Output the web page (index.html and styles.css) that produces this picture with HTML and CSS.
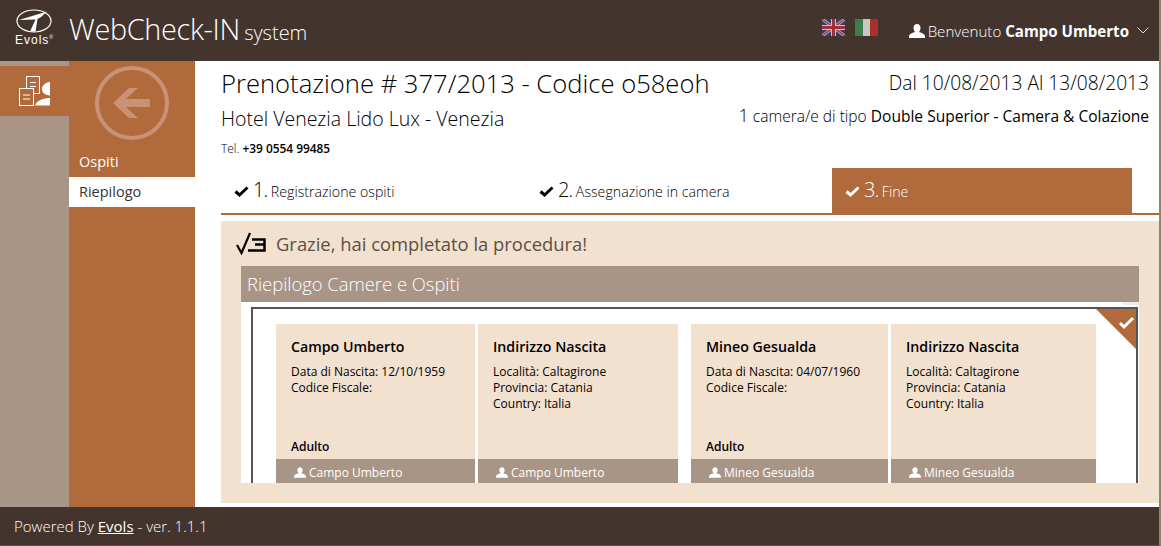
FILE: index.html
```html
<!DOCTYPE html>
<html lang="it">
<head>
    <meta charset="UTF-8">
    <title>WebCheck-IN system</title>
    <link rel="stylesheet" href="styles.css">
</head>
<body>
    <svg width="0" height="0" class="defs">
        <symbol id="person" viewBox="0 0 16 14">
            <path d="M8 0C10 0 11.500 1.500 11.500 3.800 11.500 6 10.500 7.500 9.800 8 12 8.800 16 9.500 16 12.500V14H0V12.500C0 9.500 4 8.800 6.200 8 5.500 7.500 4.500 6 4.500 3.800 4.500 1.500 6 0 8 0Z" fill="#fff"/>
        </symbol>
        <symbol id="tick" viewBox="0 0 15 11">
            <path d="M1.500 5.500L5.500 9 13.500 1.500" fill="none" stroke="currentColor" stroke-width="3"/>
        </symbol>
    </svg>

    <header class="top">
        <div class="logo">
            <svg width="36" height="24" viewBox="0 0 36 24">
                <ellipse cx="18" cy="12" rx="17" ry="11" fill="none" stroke="#fff" stroke-width="1.200"/>
                <path d="M3 11L31 2.500 25 8 21.500 10 19.500 22.500 14 22.500 19.500 10.500Z" fill="#fff"/>
            </svg>
            <span class="logo-text">Evols<sup>®</sup></span>
        </div>
        <div class="brand">WebCheck-IN <small>system</small></div>
        <div class="flags">
            <svg class="flag" viewBox="0 0 23 17">
                <rect width="23" height="17" fill="#2f3f78"/>
                <path d="M0 0L23 17M23 0L0 17" stroke="#ddd" stroke-width="3"/>
                <path d="M0 0L23 17M23 0L0 17" stroke="#b0404a" stroke-width="1.500"/>
                <path d="M11.500 0V17M0 8.500H23" stroke="#ddd" stroke-width="5"/>
                <path d="M11.500 0V17M0 8.500H23" stroke="#b0303a" stroke-width="3"/>
            </svg>
            <svg class="flag" viewBox="0 0 23 17">
                <rect width="8" height="17" fill="#3f8a55"/>
                <rect x="8" width="8" height="17" fill="#e4e0dc"/>
                <rect x="15" width="8" height="17" fill="#bb3030"/>
            </svg>
        </div>
        <div class="user">
            <svg class="person" width="16" height="14"><use href="#person"/></svg>
            <span>Benvenuto <b>Campo Umberto</b></span>
            <svg class="chevron" width="12" height="7" viewBox="0 0 12 7"><path d="M.5.5L6 6 11.500.5" fill="none" stroke="#ddd"/></svg>
        </div>
    </header>

    <div class="layout">
        <nav class="rail">
            <div class="rail-item">
                <svg width="31" height="30" viewBox="0 0 31 30">
                    <rect x="7.500" y=".5" width="13" height="17" fill="#b06a3c" stroke="#fff"/>
                    <path d="M11 6.500H17M11 10.500H17" stroke="#fff"/>
                    <rect x=".5" y="12.500" width="14" height="17" fill="#b06a3c" stroke="#fff"/>
                    <path d="M4 19H11M4 23H11" stroke="#fff"/>
                    <path d="M31 6C26 6.500 23 9.500 23 13 23 16.500 26 19 31 19.500ZM16 29.500C18 24 25 22 31 22V29.500Z" fill="#fff"/>
                </svg>
            </div>
        </nav>
        <aside class="side">
            <svg class="back" width="74" height="74" viewBox="0 0 74 74">
                <circle cx="37" cy="37" r="35" fill="none" stroke="#c99273" stroke-width="4"/>
                <path d="M18 37L34 22H43L31 33H55V41H31L43 52H34Z" fill="#c99273"/>
            </svg>
            <a class="side-link">Ospiti</a>
            <a class="side-link active">Riepilogo</a>
        </aside>
        <main class="content">
            <div class="head">
                <div class="head-left">
                    <h1>Prenotazione # 377/2013 - Codice o58eoh</h1>
                    <h2>Hotel Venezia Lido Lux - Venezia</h2>
                    <p class="tel">Tel. <b>+39 0554 99485</b></p>
                </div>
                <div class="head-right">
                    <div class="dates">Dal 10/08/2013 Al 13/08/2013</div>
                    <div class="room"><span class="num">1</span> camera/e di tipo <strong>Double Superior - Camera &amp; Colazione</strong></div>
                </div>
            </div>
            <ul class="steps">
                <li class="step"><svg class="tick" width="15" height="11"><use href="#tick"/></svg><span class="n">1.</span> Registrazione ospiti</li>
                <li class="step"><svg class="tick" width="15" height="11"><use href="#tick"/></svg><span class="n">2.</span> Assegnazione in camera</li>
                <li class="step current"><svg class="tick" width="15" height="11"><use href="#tick"/></svg><span class="n">3.</span> Fine</li>
            </ul>
            <section class="panel">
                <div class="thanks">
                    <svg width="32" height="24" viewBox="0 0 32 24">
                        <path d="M1 13L5.500 21 14 1" fill="none" stroke="#000" stroke-width="2.200"/>
                        <path d="M16 7.500H28.500V18.500H12M19 12.500H28.500" fill="none" stroke="#000" stroke-width="2.500"/>
                    </svg>
                    Grazie, hai completato la procedura!
                </div>
                <div class="recap">
                    <div class="recap-title">Riepilogo Camere e Ospiti</div>
                    <div class="recap-body">
                        <div class="room-box">
                            <svg class="corner" width="40" height="40" viewBox="0 0 40 40">
                                <path d="M0 0H40V40Z" fill="#b06a3c"/>
                                <path d="M24 14L28 18 37 9" fill="none" stroke="#fff" stroke-width="3"/>
                            </svg>
                            <div class="guest">
                                <div class="card wide">
                                    <div class="card-body">
                                        <h3>Campo Umberto</h3>
                                        <p>Data di Nascita: 12/10/1959<br>Codice Fiscale:</p>
                                        <div class="kind">Adulto</div>
                                    </div>
                                    <div class="card-foot"><svg width="12" height="11"><use href="#person"/></svg>Campo Umberto</div>
                                </div>
                                <div class="card">
                                    <div class="card-body">
                                        <h3>Indirizzo Nascita</h3>
                                        <p>Località: Caltagirone<br>Provincia: Catania<br>Country: Italia</p>
                                    </div>
                                    <div class="card-foot"><svg width="12" height="11"><use href="#person"/></svg>Campo Umberto</div>
                                </div>
                            </div>
                            <div class="guest">
                                <div class="card wide">
                                    <div class="card-body">
                                        <h3>Mineo Gesualda</h3>
                                        <p>Data di Nascita: 04/07/1960<br>Codice Fiscale:</p>
                                        <div class="kind">Adulto</div>
                                    </div>
                                    <div class="card-foot"><svg width="12" height="11"><use href="#person"/></svg>Mineo Gesualda</div>
                                </div>
                                <div class="card">
                                    <div class="card-body">
                                        <h3>Indirizzo Nascita</h3>
                                        <p>Località: Caltagirone<br>Provincia: Catania<br>Country: Italia</p>
                                    </div>
                                    <div class="card-foot"><svg width="12" height="11"><use href="#person"/></svg>Mineo Gesualda</div>
                                </div>
                            </div>
                        </div>
                    </div>
                </div>
            </section>
        </main>
    </div>

    <footer class="bottom">Powered By <a>Evols</a> - ver. 1.1.1</footer>
</body>
</html>
```

FILE: styles.css
```css
html, body {
    height: 100%;
}

body {
    margin: 0;
    width: 1161px;
    height: 546px;
    box-sizing: border-box;
    border-right: 2px solid #8f8672;
    border-bottom: 1px solid #555;
    overflow: hidden;
    display: flex;
    flex-direction: column;
    font-family: "Open Sans", sans-serif;
    color: #000;
    background: #fff;
}

.defs {
    position: absolute;
}

/* header */
.top {
    height: 61px;
    flex: none;
    display: flex;
    align-items: center;
    background: #43352e;
    color: #fff;
}

.logo {
    width: 69px;
    height: 61px;
    flex: none;
    display: flex;
    flex-direction: column;
    padding: 9px 0 0 16px;
    box-sizing: border-box;
}

.logo-text {
    font-family: "Liberation Sans", sans-serif;
    font-size: 12px;
    line-height: 12px;
    margin: 1px 0 0 -1px;
    letter-spacing: 1px;
    white-space: nowrap;
}

.logo-text sup {
    font-size: 5px;
    line-height: 0;
}

.brand {
    font-size: 28.800px;
    font-weight: 300;
    letter-spacing: -.3px;
    padding-bottom: 4px;
    white-space: nowrap;
}

.brand small {
    font-size: 20px;
    letter-spacing: 0;
    margin-left: -3px;
}

.flags {
    margin-left: auto;
    display: flex;
    gap: 10px;
    margin-top: -6px;
}

.flag {
    width: 23px;
    height: 17px;
    opacity: .85;
}

.user {
    margin: 0 10px 0 31px;
    font-size: 15.100px;
    font-weight: 300;
    display: flex;
    align-items: center;
    white-space: nowrap;
}

.user b {
    font-weight: 700;
}

.person {
    margin-right: 3px;
}

.chevron {
    margin-left: 8px;
}

/* columns */
.layout {
    flex: 1;
    display: flex;
    min-height: 0;
}

.rail {
    width: 69px;
    flex: none;
    background: #a99585;
    padding-top: 5px;
}

.rail-item {
    height: 50px;
    background: #b06a3c;
    padding: 10px 0 0 19px;
    box-sizing: border-box;
}

.side {
    width: 126px;
    flex: none;
    background: #b06a3c;
    color: #fff;
}

.back {
    display: block;
    margin: 5px 0 0 26px;
}

.side-link {
    display: block;
    height: 30px;
    line-height: 30px;
    padding-left: 10px;
    font-size: 14.500px;
}

.back + .side-link {
    margin-top: 7px;
}

.side-link.active {
    background: #fff;
    color: #333;
}

.content {
    flex: 1;
    min-width: 0;
    padding-left: 26px;
    padding-bottom: 4px;
    display: flex;
    flex-direction: column;
}

.head {
    display: flex;
    justify-content: space-between;
    height: 107px;
    flex: none;
}

h1 {
    margin: 6px 0 0;
    font-size: 25.600px;
    line-height: 34px;
    font-weight: 300;
    white-space: nowrap;
}

h2 {
    margin: 5px 0 0;
    font-size: 19.500px;
    line-height: 26px;
    font-weight: 300;
}

.tel {
    margin: 8px 0 0;
    font-size: 11.900px;
    line-height: 16px;
    font-weight: 300;
}

.tel b {
    font-weight: 600;
}

.head-right {
    text-align: right;
    padding-right: 10px;
    margin-top: 9px;
}

.dates {
    font-size: 19.200px;
    line-height: 26px;
    font-weight: 300;
}

.room {
    margin-top: 10px;
    font-size: 15.550px;
    line-height: 20px;
    font-weight: 300;
    white-space: nowrap;
}

.room strong {
    font-weight: 400;
}

.room .num {
    font-size: 18px;
    line-height: 14px;
}

/* steps */
.steps {
    list-style: none;
    margin: 0;
    padding: 0;
    height: 45px;
    flex: none;
    display: flex;
    gap: 5px;
    border-bottom: 2px solid #b06a3c;
}

.step {
    width: 300px;
    padding-left: 13px;
    box-sizing: border-box;
    line-height: 43px;
    font-size: 14.200px;
    font-weight: 300;
}

.tick {
    margin-right: 4px;
}

.n {
    font-size: 20px;
    letter-spacing: -1px;
}

.step.current {
    margin-left: 1px;
    background: #b06a3c;
    color: #fff;
}

/* panel */
.panel {
    margin-top: 6px;
    flex: 1;
    min-height: 0;
    background: #f3e1d0;
    padding: 0 20px 20px;
    display: flex;
    flex-direction: column;
}

.thanks {
    height: 45px;
    flex: none;
    display: flex;
    align-items: center;
    gap: 8px;
    margin-left: -5px;
    font-size: 18.400px;
    color: #5c4d44;
}

.recap {
    flex: 1;
    min-height: 0;
    display: flex;
    flex-direction: column;
    background: #fff;
}

.recap-title {
    height: 36px;
    flex: none;
    line-height: 36px;
    padding-left: 6px;
    font-size: 18.400px;
    font-weight: 300;
    color: #fff;
    background: #a99585;
}

.recap-body {
    position: relative;
    flex: 1;
    min-height: 0;
    overflow: hidden;
    padding: 5px 1px 0 10px;
}

/* bit of scrollbar that shows under the title */
.recap-body::before {
    content: "";
    position: absolute;
    top: 0;
    right: 0;
    width: 16px;
    height: 3px;
    background: #eee;
}

.room-box {
    position: relative;
    display: flex;
    gap: 13px;
    border: 2px solid #555;
    padding: 15px 0 0 23px;
    height: 300px;
    box-sizing: border-box;
}

.corner {
    position: absolute;
    top: 0;
    right: 0;
}

.guest {
    display: flex;
    gap: 3px;
}

.card {
    width: 200px;
    height: 159px;
    background: #f3e1d0;
    display: flex;
    flex-direction: column;
}

.card.wide {
    width: 199px;
}

.guest + .guest .card {
    width: 205px;
}

.guest + .guest .card.wide {
    width: 197px;
}

.card-body {
    flex: 1;
    padding: 12px 15px 0;
    position: relative;
    font-size: 12px;
    line-height: 16px;
}

.card h3 {
    margin: 0 0 7px;
    font-size: 14.200px;
    line-height: 21px;
    font-weight: 600;
}

.card p {
    margin: 0;
}

.kind {
    position: absolute;
    left: 15px;
    bottom: 4px;
    font-weight: 600;
}

.card-foot {
    height: 24px;
    flex: none;
    background: #a99585;
    color: #fff;
    padding: 2px 0 0 18px;
    box-sizing: border-box;
    display: flex;
    align-items: center;
    gap: 3px;
    font-size: 12px;
}

/* footer */
.bottom {
    height: 38px;
    flex: none;
    line-height: 38px;
    padding-left: 14px;
    font-size: 15px;
    font-weight: 300;
    color: #fff;
    background: #43352e;
}

.bottom a {
    text-decoration: underline;
    font-weight: 400;
}
```
